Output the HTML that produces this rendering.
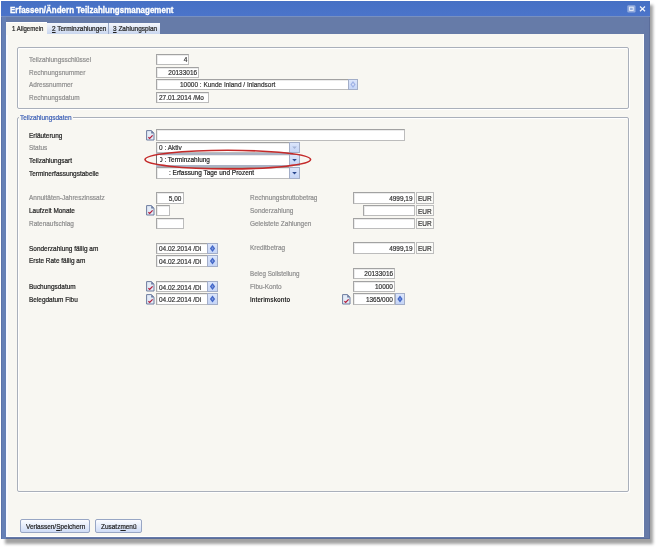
<!DOCTYPE html><html><head><meta charset="utf-8"><style>
*{margin:0;padding:0;box-sizing:border-box}
html,body{width:658px;height:548px;overflow:hidden;background:#fff;position:relative}
body{font-family:"Liberation Sans",sans-serif}
.t{position:absolute;white-space:nowrap;line-height:1;-webkit-text-stroke:0.22px currentColor;transform-origin:left}
.inp{position:absolute;background:#fff;border:1px solid #bcbcbc;border-top-color:#a2a2a2;border-left-color:#a6a6a6;box-shadow:inset 1px 1px 0 #ebebeb}
.spin,.drop{position:absolute;background:linear-gradient(#dbe5fb,#c6d5f6);border:1px solid #a3aec8}
.spin svg,.drop svg{position:absolute;left:0;top:0}
.ico{position:absolute}
.eur{position:absolute;background:#fbfbf8;border:1px solid #bdbdbd}
.grp{position:absolute;border:1px solid #aab0bb;border-radius:2px;box-shadow:1px 1px 0 #fff, inset 1px 1px 0 #fff}
</style></head><body><div style="position:absolute;left:5px;top:5px;width:648px;height:539px;background:#a2a2a2;filter:blur(1.5px)"></div>
<div style="position:absolute;left:1px;top:1px;width:648.5px;height:538px;background:#667aa8;border:1px solid #5b6d9a"></div>
<div style="position:absolute;left:1px;top:1px;width:648.5px;height:15px;background:linear-gradient(#4670c4,#4b74ca)"></div>
<div style="position:absolute;left:1px;top:16px;width:648.5px;height:1px;background:#7890c0"></div>
<div style="position:absolute;left:1px;top:17px;width:5px;height:522px;background:#6580b6;border-left:1px solid #5a72a8"></div>
<div style="position:absolute;left:6px;top:17px;width:638px;height:17px;background:#667ba8"></div>
<div style="position:absolute;left:6px;top:34px;width:638px;height:502.7px;background:#f8f7f2;border-left:2px solid #f8faff;border-right:1px solid #fff;border-bottom:1px solid #fff"></div>
<div style="position:absolute;left:6px;top:22px;width:41px;height:13px;background:#f8f7f2;border-top:1px solid #fff"></div>
<div style="position:absolute;left:47px;top:23px;width:61px;height:11px;background:linear-gradient(#f4f7fd,#c9d6ee)"></div>
<div style="position:absolute;left:108px;top:23px;width:51.5px;height:11px;background:linear-gradient(#f4f7fd,#c9d6ee);border-left:1px solid #9aa9c6"></div>
<div class="t" style="left:12px;top:25.37px;font-size:7.6px;letter-spacing:0px;color:#222;font-weight:normal;transform:scaleX(0.8);">1 Allgemein</div>
<div class="t" style="left:52px;top:25.37px;font-size:7.6px;letter-spacing:0px;color:#222;font-weight:normal;transform:scaleX(0.85);"><u>2</u> Terminzahlungen</div>
<div class="t" style="left:113px;top:25.37px;font-size:7.6px;letter-spacing:0px;color:#222;font-weight:normal;transform:scaleX(0.85);"><u>3</u> Zahlungsplan</div>
<div class="t" style="left:9.6px;top:5.75px;font-size:8.8px;letter-spacing:0.05px;color:#fff;font-weight:bold;transform:scaleX(0.9);-webkit-text-stroke:0.35px #fff">Erfassen/Ändern Teilzahlungsmanagement</div>
<svg style="position:absolute;left:0;top:0" width="658" height="20"><rect x="627.3" y="5.2" width="8.2" height="7.3" rx="1.2" fill="#93abdd"/><rect x="629.6" y="7.2" width="3.6" height="3.2" fill="none" stroke="#eef2fb" stroke-width="0.9"/><path d="M640 6.5 L645 11.2 M645 6.5 L640 11.2" stroke="#f2f5fc" stroke-width="1.2"/></svg>
<div class="grp" style="left:17px;top:47px;width:612px;height:62px"></div>
<div class="grp" style="left:17px;top:117px;width:612px;height:375px"></div>
<div style="position:absolute;left:19px;top:112px;width:54px;height:9px;background:#f8f7f2"></div>
<div class="t" style="left:20.3px;top:114.17px;font-size:7.6px;letter-spacing:0px;color:#3c5fb5;font-weight:normal;transform:scaleX(0.85);">Teilzahlungsdaten</div>
<div class="t" style="left:29.3px;top:55.87px;font-size:7.6px;letter-spacing:0px;color:#8e8e8e;font-weight:normal;transform:scaleX(0.85);">Teilzahlungsschlüssel</div>
<div class="t" style="left:29.3px;top:68.57px;font-size:7.6px;letter-spacing:0px;color:#8e8e8e;font-weight:normal;transform:scaleX(0.85);">Rechnungsnummer</div>
<div class="t" style="left:29.3px;top:81.17px;font-size:7.6px;letter-spacing:0px;color:#8e8e8e;font-weight:normal;transform:scaleX(0.85);">Adressnummer</div>
<div class="t" style="left:29.3px;top:93.87px;font-size:7.6px;letter-spacing:0px;color:#8e8e8e;font-weight:normal;transform:scaleX(0.85);">Rechnungsdatum</div>
<div class="inp" style="left:156px;top:54px;width:33px;height:11px"></div>
<div class="t" style="right:471.1px;top:56.36px;font-size:7.9px;color:#333;transform:scaleX(0.82);transform-origin:right">4</div>
<div class="inp" style="left:156px;top:67px;width:43px;height:11px"></div>
<div class="t" style="right:461.4px;top:69.16px;font-size:7.9px;color:#333;transform:scaleX(0.82);transform-origin:right">20133016</div>
<div class="inp" style="left:156px;top:79px;width:193px;height:11px"></div>
<div class="t" style="left:179.5px;top:81.46px;font-size:7.9px;color:#333;transform:scaleX(0.82)">10000 : Kunde Inland / Inlandsort</div>
<div class="spin" style="left:348px;top:79px;width:10px;height:11px"><svg width="10" height="11"><path d="M4.0 1.1 L6.6 4.5 L4.0 7.9 L1.4 4.5 Z" fill="#9fb2e6"/><path d="M4.0 2.9 L5.0 4.5 L4.0 6.1 L3.0 4.5 Z" fill="#e4ebfb"/></svg></div>
<div class="inp" style="left:156px;top:92px;width:53px;height:11px"></div>
<div class="t" style="left:158.5px;top:94.41px;font-size:7.9px;color:#333;transform:scaleX(0.82)">27.01.2014 /Mo</div>
<div class="t" style="left:28.8px;top:131.97px;font-size:7.6px;letter-spacing:0px;color:#222;font-weight:normal;transform:scaleX(0.85);">Erläuterung</div>
<svg class="ico" style="left:146px;top:129.8px" width="9" height="11" viewBox="0 0 9 11"><path d="M0.6 0.6 H5.4 L8 3.2 V10 H0.6 Z" fill="#e4ecf8" stroke="#6d7c9e" stroke-width="1"/><path d="M5.2 0.6 L8 3.4 H5.2 Z" fill="#6a7aa0"/><path d="M2.4 7.2 L3.7 8.4 L6.6 5.4" fill="none" stroke="#b41e3a" stroke-width="1.25"/></svg>
<div class="inp" style="left:156px;top:129px;width:249px;height:12px"></div>
<div class="t" style="left:28.8px;top:143.97px;font-size:7.6px;letter-spacing:0px;color:#8e8e8e;font-weight:normal;transform:scaleX(0.85);">Status</div>
<div class="inp" style="left:156px;top:142px;width:144px;height:11px"></div>
<div class="t" style="left:158.5px;top:143.71px;font-size:7.9px;color:#333;transform:scaleX(0.82)">0 : Aktiv</div>
<div class="drop" style="left:289px;top:142px;width:11px;height:11px"><svg width="11" height="11"><path d="M2.2 3.5 L6.8 3.5 L4.5 6.1 Z" fill="#a3b3d8"/></svg></div>
<div class="t" style="left:28.8px;top:156.97px;font-size:7.6px;letter-spacing:0px;color:#222;font-weight:normal;transform:scaleX(0.85);">Teilzahlungsart</div>
<div class="inp" style="left:156px;top:154px;width:144px;height:12px"></div>
<div class="t" style="left:158.5px;top:156.21px;font-size:7.9px;color:#222;transform:scaleX(0.82)">0 : Terminzahlung</div>
<div style="position:absolute;left:157px;top:155px;width:3.4px;height:9px;background:#fff"></div>
<div style="position:absolute;left:156px;top:153px;width:133px;height:2px;background:#aab2c4"></div>
<div style="position:absolute;left:156px;top:164.5px;width:133px;height:2px;background:#aab2c4"></div>
<div style="position:absolute;left:156px;top:154px;width:1.2px;height:11px;background:#707070"></div>
<div class="drop" style="left:289px;top:154px;width:11px;height:12px"><svg width="11" height="12"><path d="M2.2 4.0 L6.8 4.0 L4.5 6.6 Z" fill="#2a4890"/></svg></div>
<div class="t" style="left:28.8px;top:169.67px;font-size:7.6px;letter-spacing:0px;color:#222;font-weight:normal;transform:scaleX(0.85);">Terminerfassungstabelle</div>
<div class="inp" style="left:156px;top:167px;width:144px;height:12px"></div>
<div class="t" style="left:168.5px;top:168.91px;font-size:7.9px;color:#222;transform:scaleX(0.82)">: Erfassung Tage und Prozent</div>
<div class="drop" style="left:289px;top:167px;width:11px;height:12px"><svg width="11" height="12"><path d="M2.2 4.0 L6.8 4.0 L4.5 6.6 Z" fill="#2a4890"/></svg></div>
<div class="t" style="left:28.8px;top:194.37px;font-size:7.6px;letter-spacing:0px;color:#8e8e8e;font-weight:normal;transform:scaleX(0.85);">Annuitäten-Jahreszinssatz</div>
<div class="inp" style="left:156px;top:192px;width:28px;height:12px"></div>
<div class="t" style="right:476.2px;top:194.76px;font-size:7.9px;color:#333;transform:scaleX(0.82);transform-origin:right">5,00</div>
<div class="t" style="left:28.8px;top:206.97px;font-size:7.6px;letter-spacing:0px;color:#222;font-weight:normal;transform:scaleX(0.85);">Laufzeit Monate</div>
<svg class="ico" style="left:146px;top:205.2px" width="9" height="11" viewBox="0 0 9 11"><path d="M0.6 0.6 H5.4 L8 3.2 V10 H0.6 Z" fill="#e4ecf8" stroke="#6d7c9e" stroke-width="1"/><path d="M5.2 0.6 L8 3.4 H5.2 Z" fill="#6a7aa0"/><path d="M2.4 7.2 L3.7 8.4 L6.6 5.4" fill="none" stroke="#b41e3a" stroke-width="1.25"/></svg>
<div class="inp" style="left:156px;top:205px;width:14px;height:11px"></div>
<div class="t" style="left:28.8px;top:219.57px;font-size:7.6px;letter-spacing:0px;color:#8e8e8e;font-weight:normal;transform:scaleX(0.85);">Ratenaufschlag</div>
<div class="inp" style="left:156px;top:218px;width:28px;height:11px"></div>
<div class="t" style="left:28.8px;top:244.67px;font-size:7.6px;letter-spacing:0px;color:#222;font-weight:normal;transform:scaleX(0.85);">Sonderzahlung fällig am</div>
<div class="inp" style="left:156px;top:243px;width:52px;height:11px"></div>
<div class="t" style="left:158.5px;top:245.41px;font-size:7.9px;color:#333;transform:scaleX(0.82)">04.02.2014 /Di</div>
<div class="spin" style="left:207px;top:243px;width:11px;height:11px"><svg width="11" height="11"><path d="M4.5 1.1 L7.1 4.5 L4.5 7.9 L1.9 4.5 Z" fill="#4266c6"/><path d="M4.5 2.9 L5.5 4.5 L4.5 6.1 L3.5 4.5 Z" fill="#7f9be0"/></svg></div>
<div class="t" style="left:28.8px;top:257.17px;font-size:7.6px;letter-spacing:0px;color:#222;font-weight:normal;transform:scaleX(0.85);">Erste Rate fällig am</div>
<div class="inp" style="left:156px;top:255px;width:52px;height:12px"></div>
<div class="t" style="left:158.5px;top:258.16px;font-size:7.9px;color:#333;transform:scaleX(0.82)">04.02.2014 /Di</div>
<div class="spin" style="left:207px;top:255px;width:11px;height:12px"><svg width="11" height="12"><path d="M4.5 1.6 L7.1 5.0 L4.5 8.4 L1.9 5.0 Z" fill="#4266c6"/><path d="M4.5 3.4 L5.5 5.0 L4.5 6.6 L3.5 5.0 Z" fill="#7f9be0"/></svg></div>
<div class="t" style="left:28.8px;top:283.27px;font-size:7.6px;letter-spacing:0px;color:#222;font-weight:normal;transform:scaleX(0.85);">Buchungsdatum</div>
<svg class="ico" style="left:146px;top:281.2px" width="9" height="11" viewBox="0 0 9 11"><path d="M0.6 0.6 H5.4 L8 3.2 V10 H0.6 Z" fill="#e4ecf8" stroke="#6d7c9e" stroke-width="1"/><path d="M5.2 0.6 L8 3.4 H5.2 Z" fill="#6a7aa0"/><path d="M2.4 7.2 L3.7 8.4 L6.6 5.4" fill="none" stroke="#b41e3a" stroke-width="1.25"/></svg>
<div class="inp" style="left:156px;top:281px;width:52px;height:11px"></div>
<div class="t" style="left:158.5px;top:283.51px;font-size:7.9px;color:#333;transform:scaleX(0.82)">04.02.2014 /Di</div>
<div class="spin" style="left:207px;top:281px;width:11px;height:11px"><svg width="11" height="11"><path d="M4.5 1.1 L7.1 4.5 L4.5 7.9 L1.9 4.5 Z" fill="#4266c6"/><path d="M4.5 2.9 L5.5 4.5 L4.5 6.1 L3.5 4.5 Z" fill="#7f9be0"/></svg></div>
<div class="t" style="left:28.8px;top:295.87px;font-size:7.6px;letter-spacing:0px;color:#222;font-weight:normal;transform:scaleX(0.85);">Belegdatum Fibu</div>
<svg class="ico" style="left:146px;top:293.6px" width="9" height="11" viewBox="0 0 9 11"><path d="M0.6 0.6 H5.4 L8 3.2 V10 H0.6 Z" fill="#e4ecf8" stroke="#6d7c9e" stroke-width="1"/><path d="M5.2 0.6 L8 3.4 H5.2 Z" fill="#6a7aa0"/><path d="M2.4 7.2 L3.7 8.4 L6.6 5.4" fill="none" stroke="#b41e3a" stroke-width="1.25"/></svg>
<div class="inp" style="left:156px;top:293px;width:52px;height:12px"></div>
<div class="t" style="left:158.5px;top:295.91px;font-size:7.9px;color:#333;transform:scaleX(0.82)">04.02.2014 /Di</div>
<div class="spin" style="left:207px;top:293px;width:11px;height:12px"><svg width="11" height="12"><path d="M4.5 1.6 L7.1 5.0 L4.5 8.4 L1.9 5.0 Z" fill="#4266c6"/><path d="M4.5 3.4 L5.5 5.0 L4.5 6.6 L3.5 5.0 Z" fill="#7f9be0"/></svg></div>
<div class="t" style="left:249.9px;top:194.37px;font-size:7.6px;letter-spacing:0px;color:#8e8e8e;font-weight:normal;transform:scaleX(0.85);">Rechnungsbruttobetrag</div>
<div class="inp" style="left:353px;top:192px;width:62px;height:12px"></div>
<div class="t" style="right:245.5px;top:195.21px;font-size:7.9px;color:#333;transform:scaleX(0.82);transform-origin:right">4999,19</div>
<div class="eur" style="left:416px;top:192px;width:18px;height:12px"></div>
<div class="t" style="left:418px;top:195.21px;font-size:7.9px;color:#333;transform:scaleX(0.82)">EUR</div>
<div class="t" style="left:249.9px;top:207.37px;font-size:7.6px;letter-spacing:0px;color:#8e8e8e;font-weight:normal;transform:scaleX(0.85);">Sonderzahlung</div>
<div class="inp" style="left:363px;top:205px;width:52px;height:11px"></div>
<div class="eur" style="left:416px;top:205px;width:18px;height:11px"></div>
<div class="t" style="left:418px;top:207.61px;font-size:7.9px;color:#333;transform:scaleX(0.82)">EUR</div>
<div class="t" style="left:249.9px;top:219.97px;font-size:7.6px;letter-spacing:0px;color:#8e8e8e;font-weight:normal;transform:scaleX(0.85);">Geleistete Zahlungen</div>
<div class="inp" style="left:353px;top:218px;width:62px;height:11px"></div>
<div class="eur" style="left:416px;top:218px;width:18px;height:11px"></div>
<div class="t" style="left:418px;top:220.36px;font-size:7.9px;color:#333;transform:scaleX(0.82)">EUR</div>
<div class="t" style="left:249.9px;top:244.47px;font-size:7.6px;letter-spacing:0px;color:#8e8e8e;font-weight:normal;transform:scaleX(0.85);">Kreditbetrag</div>
<div class="inp" style="left:353px;top:242px;width:62px;height:12px"></div>
<div class="t" style="right:245.5px;top:244.76px;font-size:7.9px;color:#333;transform:scaleX(0.82);transform-origin:right">4999,19</div>
<div class="eur" style="left:416px;top:242px;width:18px;height:12px"></div>
<div class="t" style="left:418px;top:244.76px;font-size:7.9px;color:#333;transform:scaleX(0.82)">EUR</div>
<div class="t" style="left:249.9px;top:270.27px;font-size:7.6px;letter-spacing:0px;color:#8e8e8e;font-weight:normal;transform:scaleX(0.82);">Beleg Sollstellung</div>
<div class="inp" style="left:353px;top:268px;width:42px;height:11px"></div>
<div class="t" style="right:265.2px;top:270.26px;font-size:7.9px;color:#333;transform:scaleX(0.82);transform-origin:right">20133016</div>
<div class="t" style="left:249.9px;top:282.57px;font-size:7.6px;letter-spacing:0px;color:#8e8e8e;font-weight:normal;transform:scaleX(0.85);">Fibu-Konto</div>
<div class="inp" style="left:353px;top:281px;width:42px;height:11px"></div>
<div class="t" style="right:265.2px;top:283.31px;font-size:7.9px;color:#333;transform:scaleX(0.82);transform-origin:right">10000</div>
<div class="t" style="left:249.9px;top:295.77px;font-size:7.6px;letter-spacing:0px;color:#2a2a2a;font-weight:bold;transform:scaleX(0.8);-webkit-text-stroke:0">Interimskonto</div>
<svg class="ico" style="left:342px;top:293.6px" width="9" height="11" viewBox="0 0 9 11"><path d="M0.6 0.6 H5.4 L8 3.2 V10 H0.6 Z" fill="#e4ecf8" stroke="#6d7c9e" stroke-width="1"/><path d="M5.2 0.6 L8 3.4 H5.2 Z" fill="#6a7aa0"/><path d="M2.4 7.2 L3.7 8.4 L6.6 5.4" fill="none" stroke="#b41e3a" stroke-width="1.25"/></svg>
<div class="inp" style="left:353px;top:293px;width:42px;height:12px"></div>
<div class="t" style="right:265.2px;top:295.71px;font-size:7.9px;color:#333;transform:scaleX(0.82);transform-origin:right">1365/000</div>
<div class="spin" style="left:395px;top:293px;width:10px;height:12px"><svg width="10" height="12"><path d="M4.0 1.6 L6.6 5.0 L4.0 8.4 L1.4 5.0 Z" fill="#4266c6"/><path d="M4.0 3.4 L5.0 5.0 L4.0 6.6 L3.0 5.0 Z" fill="#7f9be0"/></svg></div>
<svg style="position:absolute;left:0;top:0" width="658" height="548"><ellipse cx="227.8" cy="159.6" rx="82.8" ry="9.3" fill="none" stroke="#c42a2a" stroke-width="1.6"/></svg>
<div style="position:absolute;left:20px;top:519px;width:70px;height:14px;border:1px solid #98a6c4;border-radius:2px;background:linear-gradient(#fbfcff,#cfdcf6)"></div>
<div style="position:absolute;left:95px;top:519px;width:46.5px;height:14px;border:1px solid #98a6c4;border-radius:2px;background:linear-gradient(#fbfcff,#cfdcf6)"></div>
<div class="t" style="left:25.9px;top:523.37px;font-size:7.6px;letter-spacing:0px;color:#222;font-weight:normal;transform:scaleX(0.85);">Verlassen/<u>S</u>peichern</div>
<div class="t" style="left:101px;top:523.37px;font-size:7.6px;letter-spacing:0px;color:#222;font-weight:normal;transform:scaleX(0.85);">Zusatz<u>m</u>enü</div></body></html>
